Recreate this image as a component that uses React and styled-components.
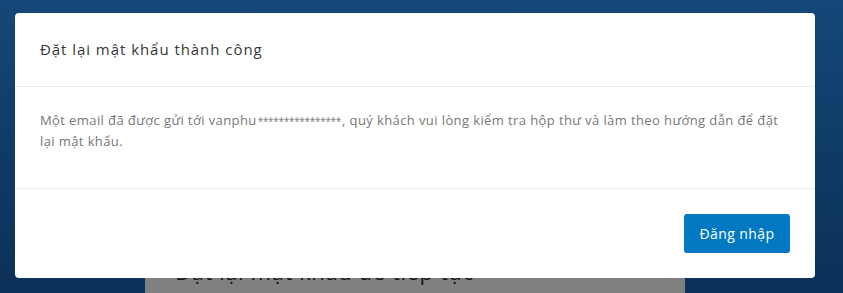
import React from "react";
import styled, { createGlobalStyle } from "styled-components";

const GlobalStyle = createGlobalStyle`
  html, body {
    margin: 0;
    padding: 0;
    height: 100%;
  }
  body {
    font-family: "Open Sans", "Noto Sans", sans-serif;
    overflow: hidden;
  }
  #root {
    height: 100%;
  }
`;

const Page = styled.div`
  height: 293px;
  background: linear-gradient(180deg, #144878 0%, #0f3a66 55%, #0c3158 100%);
  display: flex;
  flex-direction: column;
  align-items: center;
  padding-top: 240px;
  box-sizing: border-box;
  position: relative;
  overflow: hidden;
`;

const Card = styled.div`
  width: 540px;
  margin-left: -13px;
  flex: 1;
  background: #808080;
  padding: 16px 30px 0;
  box-sizing: border-box;
`;

const CardTitle = styled.h2`
  margin: 0;
  font-size: 22px;
  font-weight: 400;
  color: #141414;
  line-height: 30px;
  letter-spacing: 0.6px;
`;

const Backdrop = styled.div`
  position: absolute;
  inset: 0;
  padding: 13px 28px 0 15px;
`;

const Modal = styled.div`
  width: 800px;
  background: #fff;
  border-radius: 4px;
`;

const Header = styled.div`
  padding: 23px 25px 24px;
  border-bottom: 1px solid #e9ecef;
`;

const Title = styled.h5`
  margin: 0;
  font-size: 15px;
  font-weight: 400;
  line-height: 26px;
  letter-spacing: 0.95px;
  color: #383838;
`;

const Body = styled.div`
  padding: 23px 25px 37px;
  border-bottom: 1px solid #e9ecef;
`;

const Message = styled.p`
  margin: 0;
  font-size: 13px;
  line-height: 20.5px;
  letter-spacing: 0.4px;
  color: #777;
  max-width: 750px;
`;

const Stars = styled.span`
  display: inline-block;
  padding: 0 1px;
  font-size: 10px;
  line-height: 1;
  letter-spacing: -0.3px;
`;

const Footer = styled.div`
  display: flex;
  justify-content: flex-end;
  padding: 25px 25px 25px;
`;

const Button = styled.button`
  height: 39px;
  width: 106px;
  border: none;
  border-radius: 3px;
  background: #0079c2;
  color: #fff;
  font-family: inherit;
  font-size: 14px;
  font-weight: 500;
  letter-spacing: 0.4px;
  cursor: pointer;
`;

export default function App() {
  return (
    <>
      <GlobalStyle />
      <Page>
        <Card>
          <CardTitle>Đặt lại mật khẩu để tiếp tục</CardTitle>
        </Card>
        <Backdrop>
          <Modal>
            <Header>
              <Title>Đặt lại mật khẩu thành công</Title>
            </Header>
            <Body>
              <Message>
                Một email đã được gửi tới vanphu<Stars>****************</Stars>, quý
                khách vui lòng kiểm tra hộp thư và làm theo hướng dẫn để đặt lại
                mật khẩu.
              </Message>
            </Body>
            <Footer>
              <Button>Đăng nhập</Button>
            </Footer>
          </Modal>
        </Backdrop>
      </Page>
    </>
  );
}
